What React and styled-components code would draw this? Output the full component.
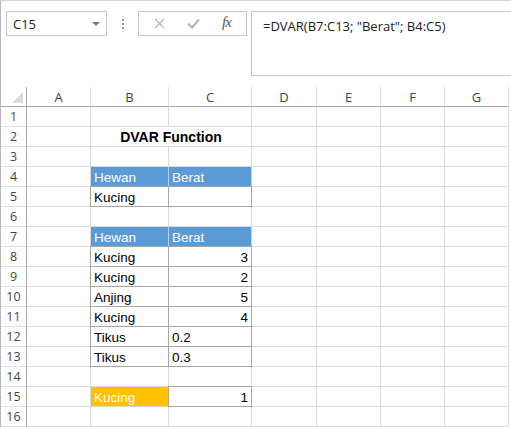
import React from 'react';
import styled, { createGlobalStyle } from "styled-components";

const Global = createGlobalStyle`
    html, body {
        margin: 0;
        padding: 0;
        background: #ffffff;
    }
`;

const Page = styled.div`
    width: 511px;
    height: 427px;
    overflow: hidden;
    box-sizing: border-box;
    border-top: 1px solid #d6d6d6;
    border-left: 1px solid #b8b8b8;
    background: #ffffff;
`;

const Toolbar = styled.div`
    display: flex;
    align-items: flex-start;
    height: 86px;
    box-sizing: border-box;
    padding: 10px 0 0 5px;
`;

const NameBox = styled.div`
    display: flex;
    align-items: center;
    justify-content: space-between;
    width: 101px;
    height: 25px;
    box-sizing: border-box;
    border: 1px solid #c6c6c6;
    padding: 0 6px 0 6px;
    font-family: "Open Sans", "Noto Sans", sans-serif;
    font-size: 13px;
    color: #222;
`;

const Arrow = styled.span`
    width: 0;
    height: 0;
    border-left: 4px solid transparent;
    border-right: 4px solid transparent;
    border-top: 4px solid #7a7a7a;
`;

const Grip = styled.div`
    display: flex;
    flex-direction: column;
    align-items: center;
    gap: 2px;
    width: 31px;
    padding-top: 8px;
    span {
        width: 2px;
        height: 2px;
        background: #9a9a9a;
    }
`;

const FxBox = styled.div`
    display: flex;
    align-items: center;
    justify-content: space-around;
    width: 109px;
    height: 25px;
    box-sizing: border-box;
    border: 1px solid #c6c6c6;
    padding: 0 4px;
`;

const Fx = styled.span`
    font-family: "Liberation Serif", serif;
    font-style: italic;
    font-size: 15px;
    color: #555;
    letter-spacing: -1px;
    margin-top: -2px;
`;

const FormulaBox = styled.div`
    flex: 1;
    height: 65px;
    margin-left: 4px;
    box-sizing: border-box;
    border: 1px solid #c6c6c6;
    border-right: none;
    padding: 5px 0 0 11px;
    font-family: "Open Sans", "Noto Sans", sans-serif;
    font-size: 13px;
    color: #222;
`;

const Grid = styled.div`
    display: grid;
    grid-template-columns: 26px 64px 78px 83px 65px 64px 64px 64px;
    grid-template-rows: 20px repeat(16, 20px);
`;

const Corner = styled.div`
    position: relative;
    box-sizing: border-box;
    border-right: 1px solid #ababab;
    border-bottom: 1px solid #ababab;
    &::after {
        content: "";
        position: absolute;
        right: 3px;
        bottom: 3px;
        width: 0;
        height: 0;
        border-left: 11px solid transparent;
        border-bottom: 11px solid #dcdcdc;
    }
`;

const ColHead = styled.div`
    display: flex;
    align-items: center;
    justify-content: center;
    box-sizing: border-box;
    border-right: 1px solid #e0e0e0;
    border-bottom: 1px solid #ababab;
    font-family: "Open Sans", "Noto Sans", sans-serif;
    font-size: 13px;
    color: #444;
`;

const RowHead = styled.div`
    display: flex;
    align-items: center;
    justify-content: center;
    box-sizing: border-box;
    border-right: 1px solid #ababab;
    border-bottom: 1px solid #e0e0e0;
    font-family: "Open Sans", "Noto Sans", sans-serif;
    font-size: 12.5px;
    color: #444;
`;

const fills = {
    blue: "#5b9bd5",
    gold: "#ffc000",
};

const Cell = styled.div`
    position: relative;
    display: flex;
    align-items: flex-end;
    justify-content: ${p => (p.$right ? "flex-end" : p.$center ? "center" : "flex-start")};
    grid-column: ${p => p.$span || "auto"};
    box-sizing: border-box;
    padding: 0 3px 1px 3px;
    border-right: 1px solid ${p => (p.$fill === "blue" ? "#b4cfea" : p.$fill ? fills[p.$fill] : "#d9d9d9")};
    border-bottom: 1px solid #d9d9d9;
    background: ${p => (p.$fill ? fills[p.$fill] : "#fff")};
    font-family: "Liberation Sans", Arial, sans-serif;
    font-size: ${p => (p.$bold ? "14px" : "13.5px")};
    font-weight: ${p => (p.$bold ? 700 : 400)};
    color: ${p => (p.$fill ? "#ffffff" : "#000000")};
    white-space: nowrap;
    &::after {
        content: "";
        display: ${p => (p.$box ? "block" : "none")};
        position: absolute;
        top: -1px;
        left: -1px;
        right: -1px;
        bottom: -1px;
        border: 1px solid #a6a6a6;
        z-index: 1;
        pointer-events: none;
    }
`;

const columns = ["A", "B", "C", "D", "E", "F", "G"];

// row -> cells for columns B and C
const data = {
    2: { title: "DVAR Function" },
    4: { b: { text: "Hewan", fill: "blue" }, c: { text: "Berat", fill: "blue" } },
    5: { b: { text: "Kucing", box: true }, c: { text: "", box: true } },
    7: { b: { text: "Hewan", fill: "blue" }, c: { text: "Berat", fill: "blue" } },
    8: { b: { text: "Kucing", box: true }, c: { text: "3", box: true, right: true } },
    9: { b: { text: "Kucing", box: true }, c: { text: "2", box: true, right: true } },
    10: { b: { text: "Anjing", box: true }, c: { text: "5", box: true, right: true } },
    11: { b: { text: "Kucing", box: true }, c: { text: "4", box: true, right: true } },
    12: { b: { text: "Tikus", box: true }, c: { text: "0.2", box: true } },
    13: { b: { text: "Tikus", box: true }, c: { text: "0.3", box: true } },
    15: { b: { text: "Kucing", fill: "gold" }, c: { text: "1", box: true, right: true } },
};

const Plain = () => <Cell />;

const BodyCell = ({ cell }) => (
    <Cell $fill={cell.fill} $box={cell.box} $right={cell.right}>{cell.text}</Cell>
);

const Row = ({ n }) => {
    const row = data[n] || {};
    return (
        <>
            <RowHead>{n}</RowHead>
            <Plain />
            {row.title ? (
                <Cell $span="span 2" $center $bold>{row.title}</Cell>
            ) : (
                <>
                    {row.b ? <BodyCell cell={row.b} /> : <Plain />}
                    {row.c ? <BodyCell cell={row.c} /> : <Plain />}
                </>
            )}
            <Plain />
            <Plain />
            <Plain />
            <Plain />
        </>
    );
};

const App = () => {
    const rows = Array.from({ length: 16 }, (_, i) => i + 1);
    return (
        <>
            <Global />
            <Page>
                <Toolbar>
                    <NameBox>
                        <span>C15</span>
                        <Arrow />
                    </NameBox>
                    <Grip>
                        <span></span>
                        <span></span>
                        <span></span>
                    </Grip>
                    <FxBox>
                        <svg width="11" height="11" viewBox="0 0 11 11">
                            <path d="M1 1 L10 10 M10 1 L1 10" stroke="#b4b4b4" strokeWidth="1.3" fill="none" />
                        </svg>
                        <svg width="13" height="11" viewBox="0 0 13 11">
                            <path d="M1 5.5 L5 9.5 L12 1.5" stroke="#b4b4b4" strokeWidth="2" fill="none" />
                        </svg>
                        <Fx>fx</Fx>
                    </FxBox>
                    <FormulaBox>=DVAR(B7:C13; "Berat"; B4:C5)</FormulaBox>
                </Toolbar>
                <Grid>
                    <Corner />
                    {columns.map(c => <ColHead key={c}>{c}</ColHead>)}
                    {rows.map(n => <Row key={n} n={n} />)}
                </Grid>
            </Page>
        </>
    );
};

export default App;
